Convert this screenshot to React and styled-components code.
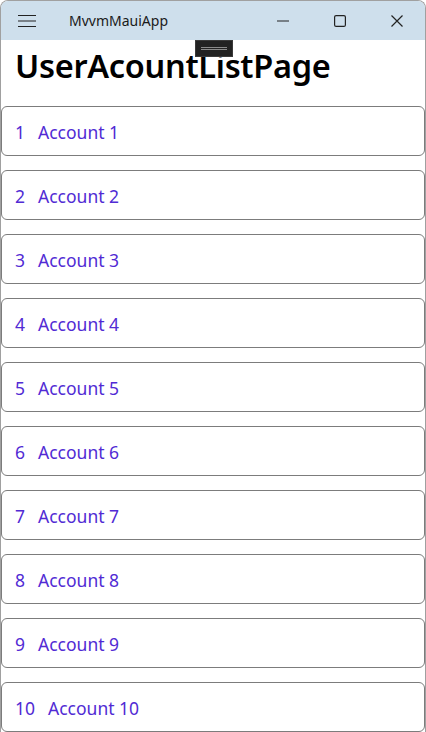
import React from "react";
import styled, { createGlobalStyle } from "styled-components";

const GlobalStyle = createGlobalStyle`
  html, body {
    margin: 0;
    padding: 0;
    background: #ffffff;
  }
  body {
    font-family: "Noto Sans", "Open Sans", sans-serif;
  }
`;

const accounts = Array.from({ length: 10 }, (_, i) => ({
  id: i + 1,
  name: `Account ${i + 1}`,
}));

const Window = styled.div`
  position: relative;
  width: 426px;
  height: 732px;
  box-sizing: border-box;
  border: 1px solid #a0a0a0;
  border-bottom: none;
  border-radius: 8px 8px 0 0;
  overflow: hidden;
  background: #ffffff;
  display: flex;
  flex-direction: column;
`;

const TitleBar = styled.div`
  height: 39px;
  flex-shrink: 0;
  background: #cedfec;
  display: flex;
  align-items: center;
`;

const MenuButton = styled.div`
  width: 50px;
  height: 39px;
  display: flex;
  align-items: center;
  justify-content: center;
  margin-left: 1px;
`;

const AppTitle = styled.div`
  flex: 1;
  margin-left: 17px;
  font-size: 14px;
  color: #1a1a1a;
`;

const CaptionButton = styled.div`
  width: 57px;
  height: 39px;
  display: flex;
  align-items: center;
  justify-content: center;
`;

const DragHandle = styled.div`
  position: absolute;
  left: 194px;
  top: 39px;
  width: 38px;
  height: 17px;
  background: #222222;
  border: 1px solid #3a3a3a;
  box-sizing: border-box;
  display: flex;
  align-items: center;
  justify-content: center;
  &::after {
    content: "";
    width: 26px;
    height: 3px;
    border-top: 1px solid #8a8a8a;
    border-bottom: 1px solid #8a8a8a;
    box-sizing: border-box;
  }
`;

const Content = styled.div`
  flex: 1;
  display: flex;
  flex-direction: column;
`;

const Heading = styled.h1`
  margin: 3px 0 0 14px;
  font-size: 32.5px;
  font-weight: 600;
  line-height: 46px;
  color: #000000;
  letter-spacing: -0.3px;
`;

const List = styled.div`
  display: flex;
  flex-direction: column;
  gap: 14px;
  padding: 17px 0 0 0;
`;

const Row = styled.div`
  height: 50px;
  box-sizing: border-box;
  border: 1px solid #7c7c7c;
  border-radius: 6px;
  display: flex;
  align-items: center;
  gap: 13px;
  padding: 1px 0 0 13px;
  font-size: 17.5px;
  color: #512bd4;
`;

function App() {
  return (
    <>
      <GlobalStyle />
      <Window>
        <TitleBar>
          <MenuButton>
            <svg width="20" height="14" viewBox="0 0 20 14">
              <path d="M1 1.5h18M1 7h18M1 12.5h18" stroke="#222" strokeWidth="1.2" />
            </svg>
          </MenuButton>
          <AppTitle>MvvmMauiApp</AppTitle>
          <CaptionButton>
            <svg width="12" height="12" viewBox="0 0 12 12">
              <path d="M0 6h12" stroke="#222" strokeWidth="1.2" />
            </svg>
          </CaptionButton>
          <CaptionButton>
            <svg width="12" height="12" viewBox="0 0 12 12">
              <rect x="0.6" y="0.6" width="10.8" height="10.8" rx="1.5" fill="none" stroke="#222" strokeWidth="1.2" />
            </svg>
          </CaptionButton>
          <CaptionButton>
            <svg width="12" height="12" viewBox="0 0 12 12">
              <path d="M0.5 0.5l11 11M11.5 0.5l-11 11" stroke="#222" strokeWidth="1.2" />
            </svg>
          </CaptionButton>
        </TitleBar>
        <DragHandle />
        <Content>
          <Heading>UserAcountListPage</Heading>
          <List>
            {accounts.map((a) => (
              <Row key={a.id}>
                <span>{a.id}</span>
                <span>{a.name}</span>
              </Row>
            ))}
          </List>
        </Content>
      </Window>
    </>
  );
}

export default App;
